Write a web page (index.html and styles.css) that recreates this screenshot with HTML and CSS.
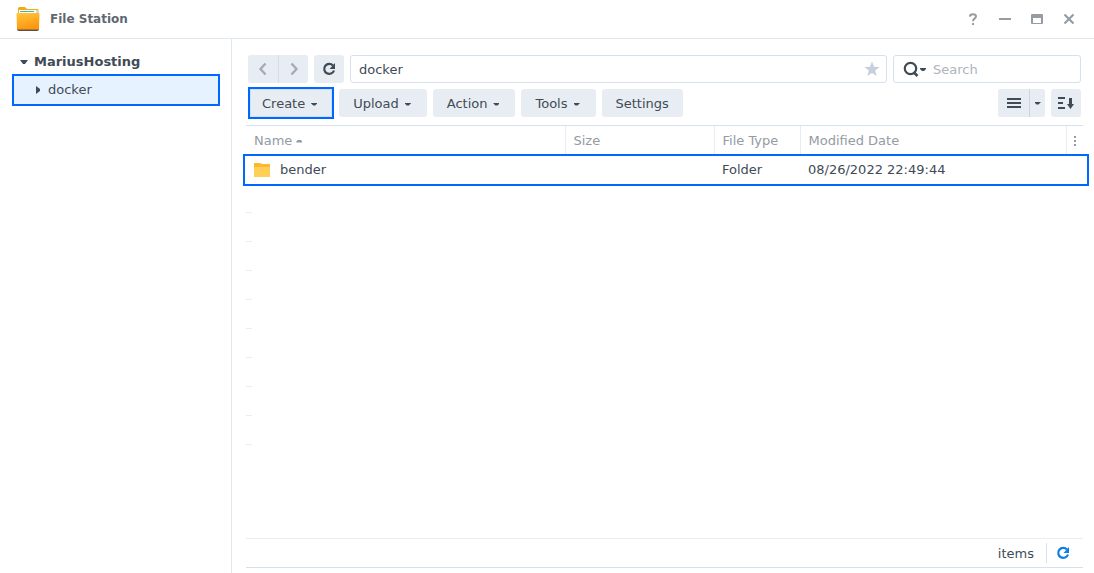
FILE: index.html
```html
<!DOCTYPE html>
<html lang="en">
<head>
<meta charset="utf-8">
<title>File Station</title>
<link rel="stylesheet" href="styles.css">
</head>
<body>
<div class="window">
  <header class="titlebar">
    <svg class="app-icon" width="24" height="24" viewBox="0 0 24 24" aria-hidden="true">
      <defs><linearGradient id="folder" x1="0" y1="0" x2="0.3" y2="1"><stop offset="0" stop-color="#ffc83d"/><stop offset="1" stop-color="#ff960f"/></linearGradient></defs>
      <path d="M2 12V1.500Q2 0 3.500 0H9l2 2h10.500q1 0 1 1v9z" fill="#f5a81c"/>
      <path d="M3 3h19v4H3z" fill="#fff"/>
      <path d="M4 4h14v1H4z" fill="#3dbd8d"/>
      <path d="M20 3h2v3h-2z" fill="#c9dedb"/>
      <path d="M1 20h22v2q0 2-2 2H3q-2 0-2-2z" fill="#5c5147"/>
      <path d="M.5 7q0-1 1-1h21q1 0 1 1L23 21q0 1.500-1 1.500H2q-1 0-1-1.500z" fill="url(#folder)"/>
    </svg>
    <h1 class="title">File Station</h1>
    <div class="window-controls">
      <button class="control" aria-label="Help"><svg width="12" height="12" viewBox="0 0 12 12"><path d="M2.800 3.700Q3 1.200 5.900 1.200Q9 1.200 9 3.500C9 5.400 6 5.500 6 8.200" fill="none" stroke="currentColor" stroke-width="2"/><path d="M5 10h2v2H5z" fill="currentColor"/></svg></button>
      <button class="control" aria-label="Minimize"><svg width="12" height="12" viewBox="0 0 12 12"><path d="M0 5h12v2H0z" fill="currentColor"/></svg></button>
      <button class="control" aria-label="Maximize"><svg width="12" height="12" viewBox="0 0 12 12"><path fill-rule="evenodd" d="M1 1h10q1 0 1 1v8q0 1-1 1H1q-1 0-1-1V2q0-1 1-1zM2 5v5h8V5z" fill="currentColor"/></svg></button>
      <button class="control" aria-label="Close"><svg width="12" height="12" viewBox="0 0 12 12"><path d="M1.500 1.500l9 9M10.500 1.500l-9 9" stroke="currentColor" stroke-width="2.200"/></svg></button>
    </div>
  </header>
  <div class="body">
    <nav class="sidebar" aria-label="Folders">
      <button class="tree-root"><svg width="8" height="4" viewBox="0 0 8 4" aria-hidden="true"><path d="M0 0h8L5 4H3z" fill="currentColor"/></svg>MariusHosting</button>
      <button class="tree-item"><svg width="4" height="8" viewBox="0 0 4 8" aria-hidden="true"><path d="M0 0l4 3v2L0 8z" fill="currentColor"/></svg>docker</button>
    </nav>
    <main class="main">
      <div class="bar">
        <div class="group">
          <button class="btn square" aria-label="Back"><svg class="faded" width="14" height="14" viewBox="0 0 14 14"><path d="M9.500 1.500L4.500 7l5 5.500" fill="none" stroke="currentColor" stroke-width="2.400"/></svg></button>
          <button class="btn square split" aria-label="Forward"><svg class="faded" width="14" height="14" viewBox="0 0 14 14"><path d="M4.500 1.500l5 5.500-5 5.500" fill="none" stroke="currentColor" stroke-width="2.400"/></svg></button>
        </div>
        <button class="btn square" aria-label="Refresh"><svg width="14" height="14" viewBox="0 0 14 14"><path d="M11 3.600A5 5 0 1 0 12 8.500" fill="none" stroke="currentColor" stroke-width="2.200"/><path d="M13 1v6H7.500z" fill="currentColor"/></svg></button>
        <div class="field path">
          <input class="input" type="text" value="docker" aria-label="Path">
          <button class="star" aria-label="Add to favorites"><svg width="16" height="16" viewBox="0 0 16 16"><path d="M8 .5l2 5.200 5.500.3-4.300 3.500 1.500 5.500L8 12l-4.700 3 1.500-5.500L.5 6 6 5.700z" fill="currentColor"/></svg></button>
        </div>
        <div class="field search">
          <button class="search-menu" aria-label="Search options"><svg width="24" height="16" viewBox="0 0 24 16"><circle cx="7.500" cy="7.500" r="5.700" fill="none" stroke="currentColor" stroke-width="2.200"/><path d="M10.500 11l4 4" stroke="currentColor" stroke-width="2.600"/><path d="M17 7h6v1l-2 2h-2l-2-2z" fill="currentColor"/></svg></button>
          <input class="input" type="text" placeholder="Search" aria-label="Search">
        </div>
      </div>
      <div class="bar tools">
        <button class="btn label marked">Create<span class="caret"></span></button>
        <button class="btn label">Upload<span class="caret"></span></button>
        <button class="btn label">Action<span class="caret"></span></button>
        <button class="btn label">Tools<span class="caret"></span></button>
        <button class="btn label">Settings</button>
        <div class="group view">
          <button class="btn view-mode" aria-label="List view"><svg width="14" height="10" viewBox="0 0 14 10"><path d="M0 0h14v2H0zM0 4h14v2H0zM0 8h14v2H0z" fill="currentColor"/></svg></button>
          <button class="btn view-menu" aria-label="View options"><span class="caret"></span></button>
        </div>
        <button class="btn square" aria-label="Sort"><svg width="16" height="12" viewBox="0 0 16 12"><path d="M0 0h7v2H0zM0 5h5v2H0zM0 10h7v2H0zM11 1h3v6h2l-3.500 5L9 7h2z" fill="currentColor"/></svg></button>
      </div>
      <div class="list">
        <table class="files">
          <colgroup><col><col class="col-size"><col class="col-type"><col class="col-date"><col class="col-menu"></colgroup>
          <thead>
            <tr><th>Name<span class="caret up"></span></th><th>Size</th><th>File Type</th><th>Modified Date</th><th class="menu-cell"><button class="columns" aria-label="Columns"><svg width="2" height="10" viewBox="0 0 2 10"><path d="M0 0h2v2H0zM0 4h2v2H0zM0 8h2v2H0z" fill="currentColor"/></svg></button></th></tr>
          </thead>
          <tbody>
            <tr class="selected"><td><span class="name"><svg width="16" height="14" viewBox="0 0 16 14" aria-hidden="true"><path d="M0 0h6l2 1h8v4H0z" fill="#fdb92b"/><path d="M0 4h16v10H0z" fill="#ffcf57"/></svg>bender</span></td><td></td><td>Folder</td><td>08/26/2022 22:49:44</td><td></td></tr>
          </tbody>
        </table>
        <div class="ticks" aria-hidden="true"><i></i><i></i><i></i><i></i><i></i><i></i><i></i><i></i><i></i></div>
      </div>
      <footer class="status">
        <span>items</span>
        <button class="reload" aria-label="Reload"><svg width="14" height="14" viewBox="0 0 14 14"><path d="M11 3.600A5 5 0 1 0 12 8.500" fill="none" stroke="currentColor" stroke-width="2.200"/><path d="M13 1v6H7.500z" fill="currentColor"/></svg></button>
      </footer>
    </main>
  </div>
</div>
</body>
</html>
```
FILE: styles.css
```css
* { box-sizing: border-box; }
body {
  margin: 0;
  background: #fff;
  color: #414b55;
  font: 13px/18px "DejaVu Sans", Verdana, sans-serif;
}
button, input {
  margin: 0;
  padding: 0;
  border: 0;
  background: none;
  color: inherit;
  font: inherit;
}
button { display: flex; align-items: center; }
svg { display: block; flex: none; }

.window { display: flex; flex-direction: column; min-height: 100vh; }
.titlebar {
  display: flex;
  align-items: center;
  gap: 10px;
  height: 39px;
  padding: 0 13px 0 16px;
  border-bottom: 1px solid #e1e8ee;
}
.title {
  margin: 0;
  color: #5f6770;
  font-size: 12px;
  font-weight: bold;
}
.window-controls { display: flex; gap: 8px; margin-left: auto; color: #969ca3; }
.control { width: 24px; height: 24px; justify-content: center; }

.body { display: flex; flex: 1; }
.sidebar {
  width: 232px;
  flex: none;
  padding: 11px 11px 8px 12px;
  border-right: 1px solid #e1e8ee;
}
.tree-root {
  gap: 6px;
  width: 100%;
  height: 24px;
  padding-left: 8px;
  font-weight: bold;
}
.tree-item {
  gap: 8px;
  width: 100%;
  height: 32px;
  padding-left: 22px;
  border: 2px solid #0068ff;
  background: #e6f2ff;
}

.main {
  display: flex;
  flex: 1;
  flex-direction: column;
  min-width: 0;
  padding: 16px 11px 5px 14px;
}
.bar { display: flex; gap: 6px; padding: 0 2px; }
.tools { margin: 6px 0 8px; }
.group { display: flex; border-radius: 3px; overflow: hidden; background: #e8edf4; }
.btn {
  justify-content: center;
  height: 28px;
  border-radius: 3px;
  background: #e8edf4;
  white-space: nowrap;
}
.label { padding: 2px 14px 0; }
.square { width: 30px; }
.group .btn { border-radius: 0; }
.split { border-left: 1px solid #d5dde6; }
.faded { opacity: 0.4; }
.marked { position: relative; }
.marked::after {
  content: "";
  position: absolute;
  inset: -2px -1px -2px 0;
  border: 2px solid #0068ff;
  box-shadow: inset 0 0 0 1px #cce0ff;
}
.caret {
  display: inline-block;
  width: 6px;
  height: 3px;
  margin: 0 2px 0 6px;
  background: currentColor;
  clip-path: polygon(0 0, 100% 0, 100% 33%, 67% 100%, 33% 100%, 0 33%);
}
.caret.up {
  margin-left: 4px;
  clip-path: polygon(33% 0, 67% 0, 100% 67%, 100% 100%, 0 100%, 0 67%);
  vertical-align: middle;
}
.view { margin-left: auto; }
.view-mode { width: 31px; }
.view-menu { width: 16px; border-left: 1px solid #ccd4df; }
.view-menu .caret { margin: 0; }

.field {
  display: flex;
  align-items: center;
  height: 28px;
  border: 1px solid #d5e1ec;
  border-radius: 3px;
}
.path { flex: 1; padding: 0 6px 0 8px; }
.search { width: 188px; gap: 6px; padding: 0 8px 0 9px; }
.input { flex: 1; min-width: 0; padding-top: 2px; outline: 0; }
.input::placeholder { color: #adb4bc; opacity: 1; }
.star { color: #c5d0dc; }

.list { flex: 1; border-top: 1px solid #d5e1ec; }
.files { width: 100%; border-collapse: collapse; table-layout: fixed; }
.col-size { width: 149px; }
.col-type { width: 86px; }
.col-date { width: 266px; }
.col-menu { width: 17px; }
.files th, .files td { height: 29px; padding: 0 8px; text-align: left; }
.files th {
  border-right: 1px solid #e6edf3;
  color: #939ba3;
  font-weight: normal;
}
.files th:last-child { border-right: 0; }
.files .menu-cell { padding: 0 7px; }
.selected { position: relative; }
.selected td:first-child::after {
  content: "";
  position: absolute;
  inset: -1px -6px -2px -3px;
  border: 2px solid #0068ff;
}
.name { display: flex; align-items: center; gap: 10px; }
.ticks { display: grid; }
.ticks i { width: 6px; height: 29px; border-bottom: 1px solid #e6edf3; }

.status {
  display: flex;
  align-items: center;
  justify-content: flex-end;
  gap: 12px;
  height: 30px;
  padding-right: 13px;
  border-top: 1px solid #e6edf3;
  border-bottom: 1px solid #d5e1ec;
}
.status span { padding-top: 2px; }
.reload { height: 20px; padding-left: 9px; border-left: 1px solid #d5e1ec; color: #0a7fe6; }
```
